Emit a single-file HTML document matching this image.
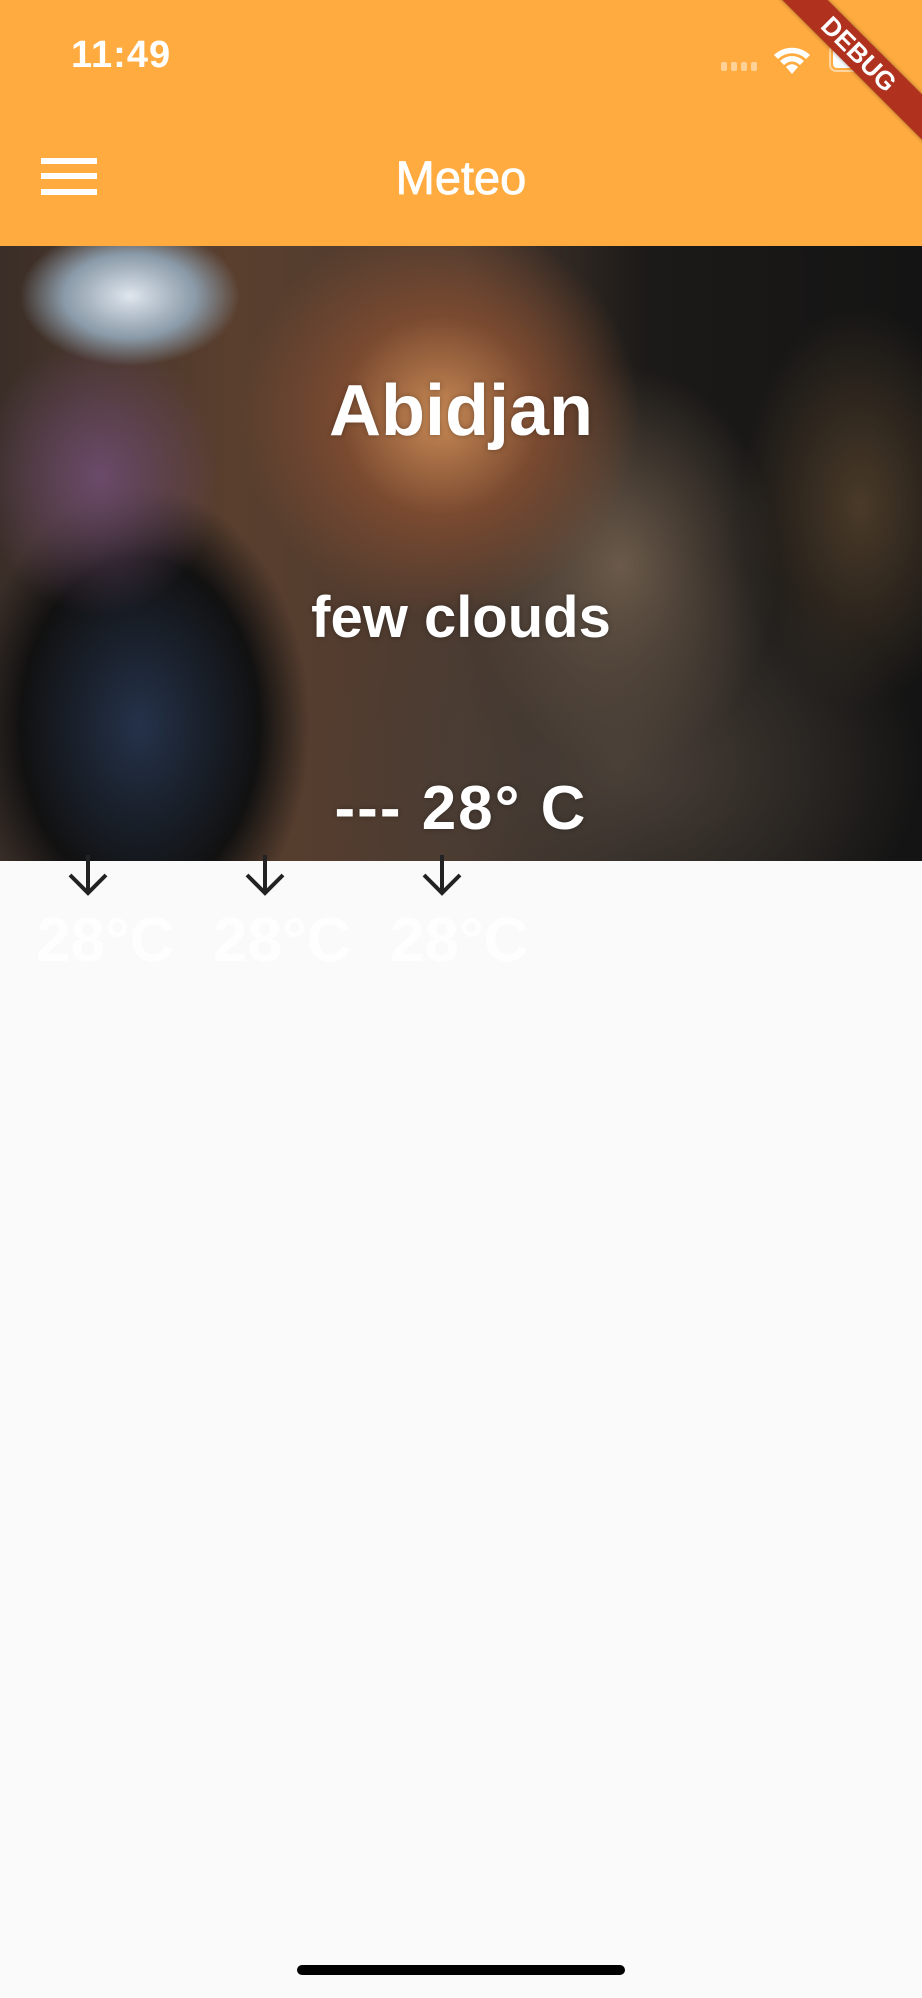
<!DOCTYPE html>
<html><head><meta charset="utf-8"><style>
*{margin:0;padding:0;box-sizing:border-box}
body{width:922px;height:1998px;background:#fafafa;position:relative;overflow:hidden;font-family:"Liberation Sans",sans-serif}
.bar{position:absolute;left:0;top:0;width:922px;height:246px;background:#ffab40}
.time{position:absolute;left:71px;top:34px;color:#fff;font-size:38px;font-weight:bold;letter-spacing:1px}
.ham{position:absolute;left:41px;width:56px;height:6px;background:#fff}
.title{position:absolute;left:0;width:922px;top:150px;text-align:center;color:#fff;font-size:47px;-webkit-text-stroke:.8px #fff}
.img{position:absolute;left:0;top:246px;width:922px;height:615px;overflow:hidden;
background:
radial-gradient(ellipse 110px 70px at 130px 50px,#dfe6ee 0,#8a9aa8 60%,transparent 100%),
radial-gradient(ellipse 120px 140px at 100px 230px,#6a4a6a 0,transparent 100%),
radial-gradient(ellipse 200px 200px at 440px 170px,#c98a55 0,#7a4a30 50%,transparent 100%),
radial-gradient(ellipse 160px 200px at 620px 320px,#6b5a4a 0,transparent 100%),
radial-gradient(ellipse 170px 240px at 140px 480px,#24324a 0,#111 70%,transparent 100%),
radial-gradient(ellipse 300px 220px at 620px 520px,#4a4038 0,transparent 100%),
radial-gradient(ellipse 120px 200px at 860px 260px,#4a3a28 0,transparent 100%),
linear-gradient(90deg,#3a2e28 0,#5a3f2e 25%,#4b3a30 50%,#1c1a18 70%,#141414 100%)}
.t{position:absolute;left:0;width:922px;text-align:center;color:#fff;font-weight:bold;text-shadow:0 0 6px rgba(0,0,0,.3)}
.arr{position:absolute;top:855px}
.small{position:absolute;top:905px;color:#fff;font-weight:bold;font-size:62px;opacity:.95}
</style></head><body>
<div class="bar">
<div class="time">11:49</div>
<svg style="position:absolute;left:720px;top:40px" width="170" height="40" viewBox="0 0 170 40">
<g fill="#fff" opacity=".45"><rect x="1" y="22" width="6" height="9" rx="2"/><rect x="11" y="22" width="6" height="9" rx="2"/><rect x="21" y="22" width="6" height="9" rx="2"/><rect x="31" y="22" width="6" height="9" rx="2"/></g>
<path d="M54 15a26 26 0 0 1 36 0l-4 4a20 20 0 0 0-28 0z M60 21a17 17 0 0 1 24 0l-4 4a11 11 0 0 0-16 0z M66 27a8 8 0 0 1 12 0l-6 7z" fill="#fff"/>
<rect x="110" y="5" width="40" height="26" rx="6" fill="none" stroke="#fff" stroke-opacity=".5" stroke-width="2"/>
<rect x="113" y="8" width="34" height="20" rx="4" fill="#fff"/>
</svg>
<div class="ham" style="top:158px"></div><div class="ham" style="top:173px"></div><div class="ham" style="top:189px"></div>
<div class="title">Meteo</div>
</div>
<div class="img"></div>
<div class="t" style="top:370px;font-size:72px">Abidjan</div>
<div class="t" style="top:584px;font-size:58px">few clouds</div>
<div class="t" style="top:773px;font-size:62px;letter-spacing:2px">--- 28° C</div>
<svg class="arr" style="left:68px" width="40" height="42" viewBox="0 0 40 42"><path d="M20 0v38M2 20l18 18 18-18" stroke="#222" stroke-width="4" fill="none"/></svg>
<svg class="arr" style="left:245px" width="40" height="42" viewBox="0 0 40 42"><path d="M20 0v38M2 20l18 18 18-18" stroke="#222" stroke-width="4" fill="none"/></svg>
<svg class="arr" style="left:422px" width="40" height="42" viewBox="0 0 40 42"><path d="M20 0v38M2 20l18 18 18-18" stroke="#222" stroke-width="4" fill="none"/></svg>
<div class="small" style="left:36px">28°C</div>
<div class="small" style="left:213px">28°C</div>
<div class="small" style="left:390px">28°C</div>
<div style="position:absolute;left:297px;top:1965px;width:328px;height:10px;border-radius:5px;background:#000"></div>
<div style="position:absolute;right:-52px;top:38px;width:230px;height:32px;background:#b0321e;transform:rotate(45deg);color:#fff;font-weight:bold;font-size:26px;text-align:center;line-height:32px;box-shadow:0 0 4px rgba(0,0,0,.4)">DEBUG</div>
</body></html>
